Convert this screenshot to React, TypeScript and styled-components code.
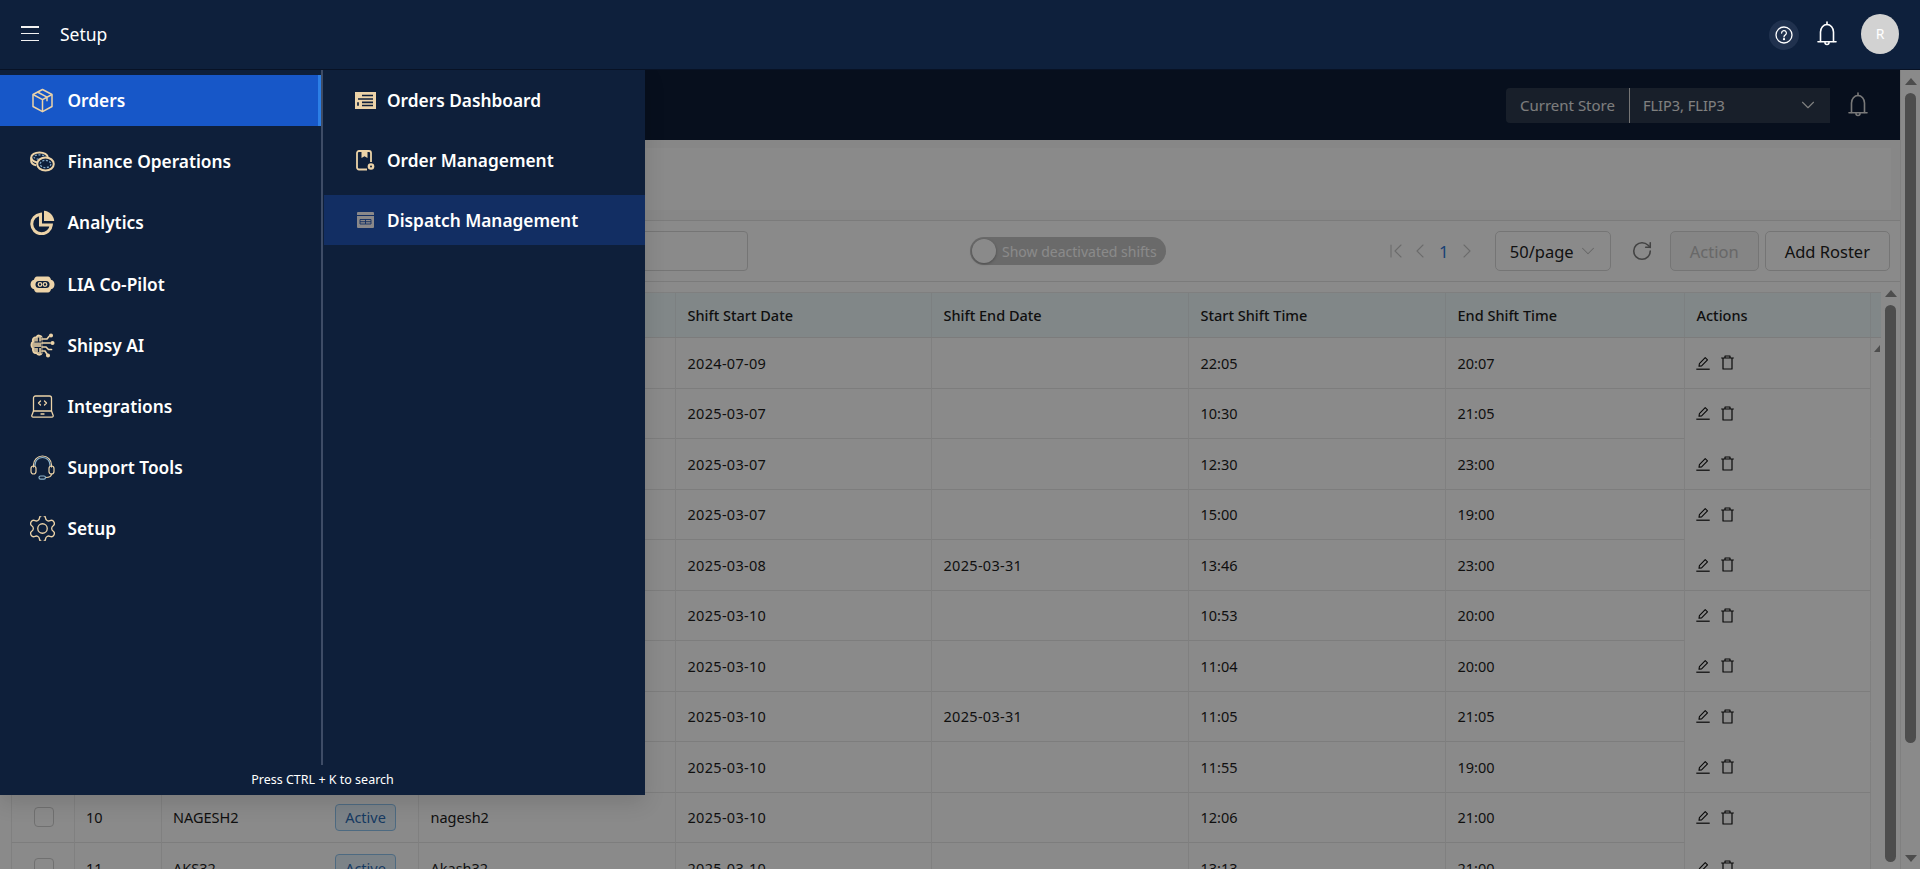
import React from 'react';
import styled, { createGlobalStyle } from 'styled-components';
import { ChevronDown, ChevronFirst, ChevronLeft, ChevronRight, RotateCw } from 'lucide-react';

const GlobalStyle = createGlobalStyle`
  html, body {
    margin: 0;
    padding: 0;
    height: 100%;
    overflow: hidden;
    background: #fff;
    font-family: 'Noto Sans', 'Open Sans', sans-serif;
  }
  * { box-sizing: border-box; }
`;

const Page = styled.div`
  position: relative;
  width: 100%;
  height: 100vh;
  display: flex;
  flex-direction: column;
  overflow: hidden;
`;

const TopBar = styled.header`
  position: relative;
  z-index: 3;
  flex: 0 0 70px;
  display: flex;
  align-items: center;
  padding: 0 21px 2px 21px;
  background: #0e203c;
  border-bottom: 1px solid #081225;
  color: #fff;
`;

const Burger = styled.div`
  width: 18px;
  height: 15px;
  display: flex;
  flex-direction: column;
  justify-content: space-between;
  span {
    display: block;
    height: 1.5px;
    background: #f2f2f2;
  }
`;

const TopTitle = styled.div`
  margin-left: 21px;
  font-size: 17.5px;
  color: #fff;
`;

const TopRight = styled.div`
  margin-left: auto;
  display: flex;
  align-items: center;
`;

const HelpButton = styled.div`
  width: 30px;
  height: 30px;
  border-radius: 50%;
  background: #20314e;
  display: flex;
  align-items: center;
  justify-content: center;
  margin-right: 18px;
  margin-top: 3px;
`;

const Avatar = styled.div`
  width: 38px;
  height: 40px;
  border-radius: 50%;
  background: #d2d2d2;
  color: #fff;
  font-size: 14px;
  display: flex;
  align-items: center;
  justify-content: center;
  margin-left: 24px;
`;

const Body = styled.div`
  flex: 1;
  display: flex;
  min-height: 0;
`;

const Main = styled.main`
  flex: 1;
  min-width: 0;
  display: flex;
  flex-direction: column;
`;

const SubHeader = styled.div`
  flex: 0 0 70px;
  display: flex;
  align-items: center;
  justify-content: flex-end;
  background: #0d1c36;
  padding-right: 32px;
`;

const StoreSelect = styled.div`
  width: 324px;
  height: 35px;
  display: flex;
  align-items: center;
  border-radius: 4px 0 0 4px;
  background: #2d3a4e;
  margin-right: 18px;
`;

const StoreLabel = styled.div`
  width: 124px;
  height: 100%;
  display: flex;
  align-items: center;
  padding-left: 14px;
  font-size: 15px;
  white-space: nowrap;
  color: #e8e8e8;
  border-right: 1px solid #d8d8d8;
`;

const StoreValue = styled.div`
  flex: 1;
  display: flex;
  align-items: center;
  justify-content: space-between;
  padding: 0 11px 0 13px;
  font-size: 14.5px;
  color: #ededed;
`;

const TitleBand = styled.div`
  flex: 0 0 80px;
  padding: 8px 9px 10px 0;
  background: #fafafa;
  div {
    height: 100%;
    background: #fff;
  }
`;

const Toolbar = styled.div`
  flex: 0 0 62px;
  display: flex;
  align-items: center;
  padding: 0 10px 0 0;
  background: #fff;
  border-top: 1px solid #e4e4e4;
  border-bottom: 1px solid #e4e4e4;
`;

const SearchBox = styled.div`
  width: 460px;
  height: 40px;
  margin-left: 288px;
  border: 1px solid #d9d9d9;
  border-radius: 4px;
`;

const ToggleChip = styled.div`
  margin-left: 222px;
  width: 196px;
  height: 28px;
  border-radius: 14px;
  background: #c4c4c4;
  display: flex;
  align-items: center;
  padding-left: 2px;
  color: #fff;
  font-size: 14px;
  white-space: nowrap;
  i {
    display: block;
    width: 24px;
    height: 24px;
    border-radius: 50%;
    background: #fff;
    box-shadow: 0 1px 3px rgba(0, 0, 0, 0.3);
    margin-right: 6px;
  }
`;

const ToolbarRight = styled.div`
  margin-left: auto;
  display: flex;
  align-items: center;
`;

const Pager = styled.div`
  display: flex;
  align-items: center;
  color: #c6c6c6;
  margin-right: 16px;
  b {
    font-weight: 400;
    font-size: 17px;
    color: #2f78d8;
    margin: 0 6px 0 7px;
  }
`;

const PageSize = styled.div`
  width: 116px;
  height: 40px;
  border: 1px solid #d9d9d9;
  border-radius: 5px;
  display: flex;
  align-items: center;
  justify-content: space-between;
  padding: 0 11px 0 14px;
  font-size: 16.5px;
  color: #222;
`;

const Refresh = styled.div`
  display: flex;
  margin: 0 17px 0 20px;
  color: #7d7d7d;
`;

const ToolButton = styled.div<{ $disabled?: boolean }>`
  height: 40px;
  padding: 0 19px;
  margin-left: ${(p) => (p.$disabled ? '0' : '6px')};
  border: 1px solid #d9d9d9;
  border-radius: 5px;
  display: flex;
  align-items: center;
  font-size: 16.5px;
  color: ${(p) => (p.$disabled ? '#c0c0c0' : '#222')};
  background: ${(p) => (p.$disabled ? '#f5f5f5' : '#fff')};
`;

const TableArea = styled.div`
  flex: 1;
  min-height: 0;
  display: flex;
  background: #fff;
`;

const TableWrap = styled.div`
  flex: 1;
  min-width: 0;
  overflow: hidden;
  padding: 10px 0 0 11px;
`;

const columns = '63.5px 87px 257.5px 257px 256px 257px 257px 239px 186px 10px';

const HeadRow = styled.div`
  display: grid;
  grid-template-columns: ${columns};
  height: 46px;
  background: #eff9fb;
  border-top: 1px solid #eaeaea;
  border-bottom: 1px solid #e6e6e6;
`;

const HeadCell = styled.div`
  display: flex;
  align-items: center;
  padding-left: 11.5px;
  font-size: 14.5px;
  font-weight: 500;
  color: #1c1c1c;
  border-right: 1px solid #e6ecee;
  &:last-child {
    border-right: 0;
  }
`;

const Row = styled.div`
  display: grid;
  grid-template-columns: ${columns};
  height: 50.5px;
`;

const Cell = styled.div<{ $ruled?: boolean }>`
  display: flex;
  align-items: center;
  padding-left: 11.5px;
  font-size: 14.5px;
  color: #1c1c1c;
  border-right: 1px solid #ececec;
  border-bottom: 1px solid ${(p) => (p.$ruled === false ? 'transparent' : '#e8e8e8')};
  &:first-child {
    border-left: 1px solid #ececec;
  }
`;

const DateCell = styled(Cell)`
  letter-spacing: 0.3px;
`;

const NameCell = styled(Cell)`
  justify-content: space-between;
  padding-right: 22px;
`;

const CheckBox = styled.div`
  width: 20px;
  height: 20px;
  margin-left: 10px;
  border: 1px solid #cfcfcf;
  border-radius: 4px;
  background: #fff;
`;

const Badge = styled.div`
  width: 61px;
  height: 27px;
  display: flex;
  align-items: center;
  justify-content: center;
  border: 1px solid #8fc4ee;
  border-radius: 4px;
  background: #e6f3fc;
  color: #2c6cb4;
  font-size: 14.5px;
`;

const ActionIcons = styled.div`
  display: flex;
  align-items: center;
  gap: 11px;
  margin-left: -1px;
`;

const Scrollbar = styled.div<{ $page?: boolean }>`
  flex: 0 0 ${(p) => (p.$page ? '20px' : '19px')};
  display: flex;
  flex-direction: column;
  align-items: center;
  background: #fff;
  border-left: ${(p) => (p.$page ? '1px solid #ececec' : '0')};
  padding: 8px 0 7px;
`;

const Thumb = styled.div<{ $h: string }>`
  width: 11px;
  height: ${(p) => p.$h};
  flex: ${(p) => (p.$h === 'auto' ? '1' : 'none')};
  margin-top: 8px;
  border-radius: 6px;
  background: #8f8f8f;
`;

const ArrowUp = styled.div`
  flex: none;
  width: 0;
  height: 0;
  border-left: 6px solid transparent;
  border-right: 6px solid transparent;
  border-bottom: 7px solid #8f8f8f;
`;

const ArrowDown = styled(ArrowUp)`
  margin-top: auto;
  border-bottom: 0;
  border-top: 7px solid #8f8f8f;
`;

const InnerArrow = styled.div`
  width: 0;
  height: 0;
  margin: 7px 0 0 3px;
  border-left: 6px solid transparent;
  border-bottom: 7px solid #8f8f8f;
`;

const Scrim = styled.div`
  position: absolute;
  left: 0;
  right: 0;
  top: 70px;
  bottom: 0;
  z-index: 1;
  background: rgba(0, 0, 0, 0.46);
`;

const NavPanel = styled.nav`
  position: absolute;
  z-index: 2;
  left: 0;
  top: 70px;
  width: 645px;
  height: 725px;
  display: flex;
  flex-direction: column;
  background: #0e1f3a;
  box-shadow: 0 8px 20px rgba(0, 0, 0, 0.12);
`;

const NavColumns = styled.div`
  height: 695px;
  display: grid;
  grid-template-columns: 321px 3px 1fr;
`;

const NavList = styled.div`
  display: flex;
  flex-direction: column;
  gap: 10px;
  padding-top: 5px;
`;

const NavItem = styled.div<{ $active?: boolean }>`
  height: 51.2px;
  display: flex;
  align-items: center;
  gap: 12.5px;
  padding-left: 30px;
  font-size: 17.3px;
  font-weight: 600;
  white-space: nowrap;
  color: #fff;
  background: ${(p) => (p.$active ? '#1757c8' : 'transparent')};
  border-right: 3px solid ${(p) => (p.$active ? '#2c7fe6' : 'transparent')};
`;

const IconSlot = styled.span`
  flex: 0 0 25px;
  width: 25px;
  height: 25px;
  display: flex;
  align-items: center;
  justify-content: center;
`;

const Divider = styled.div`
  background: #3e4c66;
  width: 2px;
`;

const SubList = styled.div`
  display: flex;
  flex-direction: column;
  gap: 10px;
  padding-top: 5px;
`;

const SubItem = styled.div<{ $active?: boolean }>`
  height: 50px;
  display: flex;
  align-items: center;
  gap: 9px;
  padding-left: 29px;
  font-size: 17.3px;
  font-weight: 600;
  white-space: nowrap;
  color: #fff;
  background: ${(p) => (p.$active ? '#122e63' : 'transparent')};
  svg {
    opacity: ${(p) => (p.$active ? 0.55 : 1)};
  }
`;

const SearchHint = styled.div`
  flex: 1;
  display: flex;
  align-items: center;
  justify-content: center;
  font-size: 12.5px;
  color: #fff;
  padding-bottom: 2px;
`;

const cream = '#ecd3a8';
const blueTint = '#7fa6c4';

const BoxIcon = () => (
  <svg width="23" height="25" viewBox="0 0 23 25" fill="none" stroke={cream} strokeWidth="1.5" strokeLinejoin="round">
    <path d="M11.5 1.5 21 6.5v12l-9.5 5.2L2 18.5v-12z" />
    <path d="M2 6.5l9.5 5.2L21 6.5M11.5 11.7v12M6.5 4l9.500 5.200v4" />
  </svg>
);

const CoinsIcon = () => (
  <svg width="25" height="21" viewBox="0 0 25 21" fill="none" stroke={cream} strokeWidth="2">
    <ellipse cx="9.500" cy="6.500" rx="8.300" ry="5" />
    <path d="M1.200 6.500v3.500c0 2 2 3.600 5 4.400" />
    <ellipse cx="9.500" cy="6" rx="5.500" ry="2.200" stroke={blueTint} strokeWidth="1.200" strokeDasharray="2 1.500" />
    <ellipse cx="15.500" cy="13" rx="8.300" ry="6.500" fill="#0e1f3a" />
    <ellipse cx="15.500" cy="13" rx="5.300" ry="3.600" stroke={blueTint} strokeWidth="1.300" strokeDasharray="2 1.500" />
  </svg>
);

const PieIcon = () => (
  <svg width="25" height="25" viewBox="0 0 25 25" fill="none">
    <path d="M10.500 4.200A9.800 9.800 0 1 0 21.300 15H10.500z" stroke={cream} strokeWidth="3" />
    <path d="M14 .8c5.500.4 9.800 4.800 10.200 10.200H14z" fill={cream} />
  </svg>
);

const RobotIcon = () => (
  <svg width="25" height="17" viewBox="0 0 25 17" fill="none">
    <path d="M7 .5h11c1.600 0 2.600 1.400 3 3.200 2 .2 3.500 2.200 3.500 4.800s-1.500 4.600-3.500 4.800c-.4 1.800-1.400 3.200-3 3.200H7c-1.600 0-2.600-1.400-3-3.200C2 13.100.5 11.100.5 8.500S2 3.900 4 3.700C4.400 1.900 5.400.5 7 .5z" fill={cream} />
    <rect x="5.500" y="5" width="14" height="7" rx="3.500" fill="#0e1f3a" />
    <circle cx="10" cy="8.500" r="1.800" stroke={cream} strokeWidth="1.300" />
    <circle cx="15" cy="8.500" r="1.800" stroke={cream} strokeWidth="1.300" />
  </svg>
);

const BrainIcon = () => (
  <svg width="25" height="25" viewBox="0 0 25 25" fill="none" stroke={cream} strokeWidth="1.700" strokeLinecap="round">
    <path d="M12 4.500C11 2 7.500 1.800 6.500 4 3.500 3.800 2 6.500 3 8.500.8 10 .8 14 3 15.500c-1 2.500 1 5 3.500 4.500 1 2.500 4.500 2.500 5.500 0z" fill={cream} fillOpacity="0.8" />
    <path d="M12 4.500V20M5 9h7M5 14.500h7M8.500 5v4M8.500 14.500v4" stroke="#0e1f3a" strokeWidth="1.200" />
    <path d="M12 6h5l2-2.500M12 10h8M12 14h4l2.500 2.500h3M12 18h3l2 3" />
    <circle cx="21" cy="2.500" r="1.200" fill={cream} />
    <circle cx="22.500" cy="10" r="1.200" fill={cream} />
    <circle cx="18" cy="22.500" r="1.200" fill={cream} />
  </svg>
);

const LaptopIcon = () => (
  <svg width="23" height="23" viewBox="0 0 23 23" fill="none" stroke={cream} strokeWidth="1.300" strokeLinecap="round" strokeLinejoin="round">
    <path d="M2.500 16V3a2 2 0 0 1 2-2h14a2 2 0 0 1 2 2v13" />
    <path d="M2.500 16 .8 20.500c-.2.800.4 1.700 1.200 1.700h19c.8 0 1.400-.9 1.200-1.700L20.500 16z" />
    <path d="M9.500 6 7.500 8l2 2M13.500 6l2 2-2 2M10 19h3" />
  </svg>
);

const HeadsetIcon = () => (
  <svg width="25" height="25" viewBox="0 0 25 25" fill="none" stroke={cream} strokeWidth="1.200" strokeLinecap="round">
    <path d="M3.500 12V10a9 9 0 0 1 18 0v2" />
    <path d="M5 10.500V10a7.500 7.500 0 0 1 15 0v.5" stroke="#8db4cc" />
    <rect x="1" y="11" width="5" height="8" rx="2.500" />
    <rect x="19" y="11" width="5" height="8" rx="2.500" />
    <path d="M21.500 19c0 2.500-2.500 3.500-6 3.500" />
    <rect x="9" y="21" width="6.500" height="3.200" rx="1.600" stroke="#8db4cc" />
  </svg>
);

const GearIcon = () => (
  <svg width="25" height="25" viewBox="2.500 2.500 19 19" fill="none" stroke={cream} strokeWidth="1" strokeLinecap="round" strokeLinejoin="round">
    <path d="M9.671 4.136a2.340 2.340 0 0 1 4.659 0 2.340 2.340 0 0 0 3.319 1.915 2.340 2.340 0 0 1 2.330 4.033 2.340 2.340 0 0 0 0 3.831 2.340 2.340 0 0 1-2.330 4.033 2.340 2.340 0 0 0-3.319 1.915 2.340 2.340 0 0 1-4.659 0 2.340 2.340 0 0 0-3.320-1.915 2.340 2.340 0 0 1-2.330-4.033 2.340 2.340 0 0 0 0-3.831A2.340 2.340 0 0 1 6.350 6.051a2.340 2.340 0 0 0 3.320-1.915" />
    <circle cx="12" cy="12" r="3.600" />
  </svg>
);

const DashboardIcon = () => (
  <svg width="21" height="17" viewBox="0 0 21 17">
    <path d="M0 0h21v17H0z" fill={cream} />
    <path d="M7 3.500h11M3 7h15M7 10.300h11M7 13.500h11M3 10.300v3.500" stroke="#0e1f3a" strokeWidth="1.700" />
  </svg>
);

const ManagementIcon = () => (
  <svg width="19" height="21" viewBox="0 0 19 21" fill="none">
    <path d="M11 19.500H3a2 2 0 0 1-2-2V3a2 2 0 0 1 2-2h10a2 2 0 0 1 2 2v9" stroke={cream} strokeWidth="1.800" />
    <path d="M5.500 1.500h6V8l-3-1.800L5.500 8z" fill={cream} />
    <circle cx="15" cy="16.500" r="3.300" fill={cream} />
    <circle cx="15" cy="16.500" r="1" fill="#0e1f3a" />
  </svg>
);

const DispatchIcon = () => (
  <svg width="17" height="16" viewBox="0 0 17 16">
    <rect width="17" height="16" rx="1" fill={cream} />
    <path d="M0 3.500h17" stroke="#122e63" strokeWidth="1" />
    <path d="M3 7.500h11V12H3zM8.500 7.500V12M3 9.700h11" stroke="#122e63" strokeWidth="0.900" fill="none" />
  </svg>
);

const BellIcon = ({ color }: { color: string }) => (
  <svg width="20" height="26" viewBox="0 0 20 26" fill="none" stroke={color} strokeWidth="1.600" strokeLinecap="round" strokeLinejoin="round">
    <path d="M10 1v2.500" />
    <path d="M3.500 20.500V11a6.500 7.500 0 0 1 13 0v9.500" />
    <path d="M1 20.800h18" />
    <path d="M8 21.500a2 2 0 0 0 4 0" />
  </svg>
);

const HelpIcon = () => (
  <svg width="18" height="18" viewBox="0 0 18 18" fill="none" stroke="#fff" strokeWidth="1.300" strokeLinecap="round">
    <circle cx="9" cy="9" r="8" />
    <path d="M6.600 7a2.400 2.400 0 1 1 3.500 2.200c-.8.400-1.100.9-1.100 1.700" />
    <circle cx="9" cy="13.200" r=".5" fill="#fff" />
  </svg>
);

const EditIcon = () => (
  <svg width="14" height="14" viewBox="0 0 14 14" fill="none" stroke="#111" strokeWidth="1.100" strokeLinejoin="round">
    <path d="M3 10.300 3.400 7.700 9.200 1.700l2.300 2.200-5.900 6z" />
    <path d="M.3 13.200h13.400" strokeWidth="1.200" />
  </svg>
);

const TrashIcon = () => (
  <svg width="13" height="15" viewBox="0 0 13 15" fill="none" stroke="#111" strokeWidth="1.200" strokeLinejoin="round">
    <path d="M.2 3h12.600M4 3V1h5v2M2 3v11h9V3" />
  </svg>
);

const menuItems = [
  { label: 'Orders', icon: <BoxIcon />, active: true },
  { label: 'Finance Operations', icon: <CoinsIcon /> },
  { label: 'Analytics', icon: <PieIcon /> },
  { label: 'LIA Co-Pilot', icon: <RobotIcon /> },
  { label: 'Shipsy AI', icon: <BrainIcon /> },
  { label: 'Integrations', icon: <LaptopIcon /> },
  { label: 'Support Tools', icon: <HeadsetIcon /> },
  { label: 'Setup', icon: <GearIcon /> },
];

const subItems = [
  { label: 'Orders Dashboard', icon: <DashboardIcon /> },
  { label: 'Order Management', icon: <ManagementIcon /> },
  { label: 'Dispatch Management', icon: <DispatchIcon />, active: true },
];

const headers = ['', '', '', '', 'Shift Start Date', 'Shift End Date', 'Start Shift Time', 'End Shift Time', 'Actions', ''];

type RosterRow = {
  no?: string;
  name?: string;
  user?: string;
  start: string;
  end?: string;
  from: string;
  to: string;
};

const rows: RosterRow[] = [
  { start: '2024-07-09', from: '22:05', to: '20:07' },
  { start: '2025-03-07', from: '10:30', to: '21:05' },
  { start: '2025-03-07', from: '12:30', to: '23:00' },
  { start: '2025-03-07', from: '15:00', to: '19:00' },
  { start: '2025-03-08', end: '2025-03-31', from: '13:46', to: '23:00' },
  { start: '2025-03-10', from: '10:53', to: '20:00' },
  { start: '2025-03-10', from: '11:04', to: '20:00' },
  { start: '2025-03-10', end: '2025-03-31', from: '11:05', to: '21:05' },
  { start: '2025-03-10', from: '11:55', to: '19:00' },
  { no: '10', name: 'NAGESH2', user: 'nagesh2', start: '2025-03-10', from: '12:06', to: '21:00' },
  { no: '11', name: 'AKS32', user: 'Akash32', start: '2025-03-10', from: '13:13', to: '21:00' },
];

export default function App() {
  return (
    <Page>
      <GlobalStyle />
      <TopBar>
        <Burger>
          <span />
          <span />
          <span />
        </Burger>
        <TopTitle>Setup</TopTitle>
        <TopRight>
          <HelpButton>
            <HelpIcon />
          </HelpButton>
          <BellIcon color="#fff" />
          <Avatar>R</Avatar>
        </TopRight>
      </TopBar>
      <Body>
        <Main>
          <SubHeader>
            <StoreSelect>
              <StoreLabel>Current Store</StoreLabel>
              <StoreValue>
                FLIP3, FLIP3
                <ChevronDown size={22} strokeWidth={1.2} />
              </StoreValue>
            </StoreSelect>
            <BellIcon color="#e0e0e0" />
          </SubHeader>
          <TitleBand>
            <div />
          </TitleBand>
          <Toolbar>
            <SearchBox />
            <ToggleChip>
              <i />
              Show deactivated shifts
            </ToggleChip>
            <ToolbarRight>
              <Pager>
                <ChevronFirst size={24} strokeWidth={1.1} />
                <ChevronLeft size={24} strokeWidth={1.1} />
                <b>1</b>
                <ChevronRight size={24} strokeWidth={1.1} />
              </Pager>
              <PageSize>
                50/page
                <ChevronDown size={22} strokeWidth={1.1} color="#bdbdbd" />
              </PageSize>
              <Refresh>
                <RotateCw size={22} strokeWidth={1.7} />
              </Refresh>
              <ToolButton $disabled>Action</ToolButton>
              <ToolButton>Add Roster</ToolButton>
            </ToolbarRight>
          </Toolbar>
          <TableArea>
            <TableWrap>
              <HeadRow>
                {headers.map((h, i) => (
                  <HeadCell key={i}>{h}</HeadCell>
                ))}
              </HeadRow>
              {rows.map((r, i) => (
                <Row key={i}>
                  <Cell>
                    <CheckBox />
                  </Cell>
                  <Cell>{r.no}</Cell>
                  <NameCell>
                    {r.name}
                    <Badge>Active</Badge>
                  </NameCell>
                  <Cell>{r.user}</Cell>
                  <DateCell>{r.start}</DateCell>
                  <DateCell>{r.end}</DateCell>
                  <Cell>{r.from}</Cell>
                  <Cell>{r.to}</Cell>
                  <Cell $ruled={i % 2 === 0}>
                    <ActionIcons>
                      <EditIcon />
                      <TrashIcon />
                    </ActionIcons>
                  </Cell>
                  {i === 0 && <InnerArrow />}
                </Row>
              ))}
            </TableWrap>
            <Scrollbar>
              <ArrowUp />
              <Thumb $h="auto" />
            </Scrollbar>
          </TableArea>
        </Main>
        <Scrollbar $page>
          <ArrowUp />
          <Thumb $h="650px" />
          <ArrowDown />
        </Scrollbar>
      </Body>
      <Scrim />
      <NavPanel>
        <NavColumns>
          <NavList>
            {menuItems.map((m) => (
              <NavItem key={m.label} $active={m.active}>
                <IconSlot>{m.icon}</IconSlot>
                {m.label}
              </NavItem>
            ))}
          </NavList>
          <Divider />
          <SubList>
            {subItems.map((s) => (
              <SubItem key={s.label} $active={s.active}>
                <IconSlot>{s.icon}</IconSlot>
                {s.label}
              </SubItem>
            ))}
          </SubList>
        </NavColumns>
        <SearchHint>Press CTRL + K to search</SearchHint>
      </NavPanel>
    </Page>
  );
}
